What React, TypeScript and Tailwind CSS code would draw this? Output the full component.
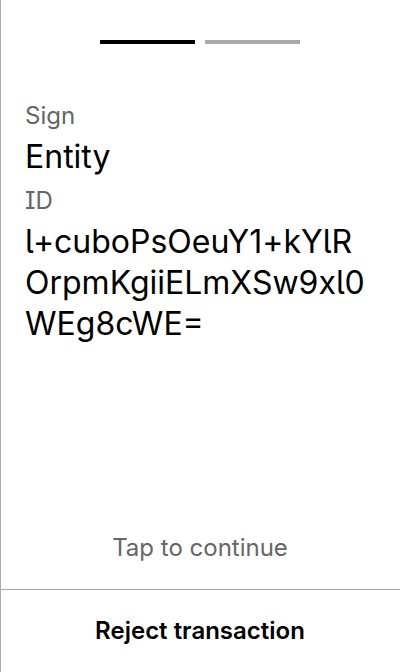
import React from "react";

export default function App() {
  return (
    <div
      className="h-screen flex flex-col bg-white border-l border-[#aaaaaa] text-black"
      style={{ fontFamily: "Inter, 'Noto Sans', sans-serif" }}
    >
      <div className="flex justify-center gap-[10px] pt-10 pr-[1px]">
        <div className="w-[95px] h-1 bg-black" />
        <div className="w-[95px] h-1 bg-[#aaaaaa]" />
      </div>
      <div className="pl-6 pr-4 pt-[56px] [font-feature-settings:'cv05','cv08']">
        <div className="text-[24px] leading-[32px] text-[#666666]">Sign</div>
        <div className="text-[32px] leading-[40px] mt-[5px]">Entity</div>
        <div className="text-[24px] leading-[32px] text-[#666666] mt-[8px]">ID</div>
        <div className="text-[32px] leading-[41px] mt-[4px] whitespace-nowrap">
          l+cuboPsOeuY1+kYlR
          <br />
          OrpmKgiiELmXSw9xl0
          <br />
          WEg8cWE=
        </div>
      </div>
      <div className="flex-1" />
      <div className="text-center text-[24px] leading-[32px] text-[#666666] mb-[25px] pr-[1px] [font-feature-settings:'cv05','cv08']">
        Tap to continue
      </div>
      <div className="border-t border-[#aaaaaa] h-[83px] flex items-center justify-center pr-[1px]">
        <span className="text-[24px] font-semibold leading-[32px]">Reject transaction</span>
      </div>
    </div>
  );
}
